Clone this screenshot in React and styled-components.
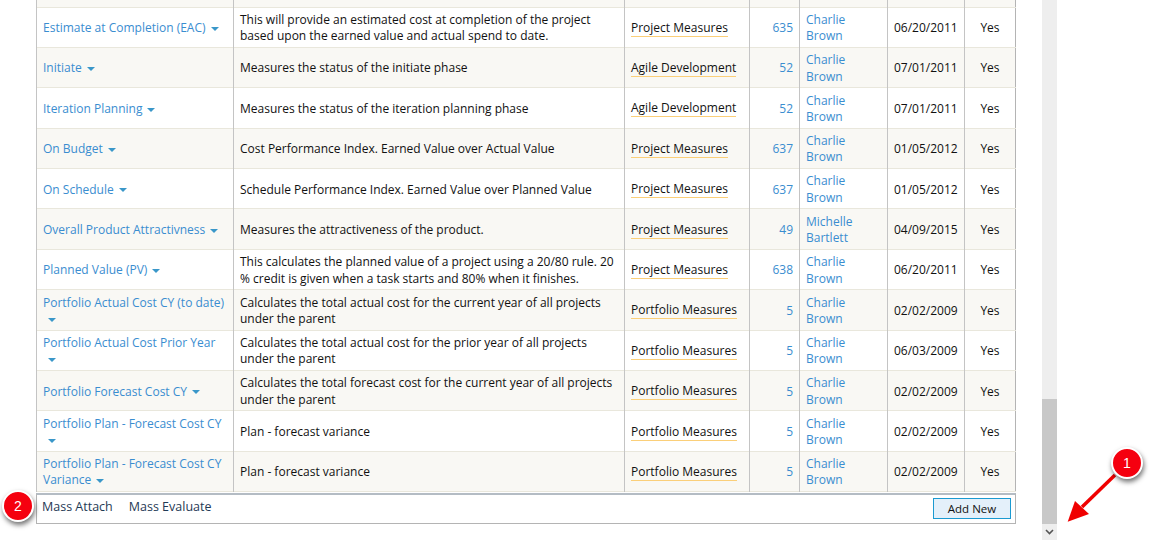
import React from "react";
import styled, { createGlobalStyle } from "styled-components";

const GlobalStyle = createGlobalStyle`
  html, body { margin: 0; padding: 0; background: #fff; overflow: hidden; }
  body { font-family: "Open Sans", "Liberation Sans", sans-serif; font-size: 12px; color: #111; }
`;

const Page = styled.div`
  position: relative;
  width: 1153px;
  height: 540px;
  display: flex;
  overflow: hidden;
`;

const Content = styled.div`
  width: 980px;
  margin-left: 36px;
  margin-right: 26px;
`;

const Table = styled.table`
  width: 980px;
  table-layout: fixed;
  border-collapse: collapse;
  border-left: 1px solid #b4b4b4;
  border-right: 1px solid #b4b4b4;
  line-height: 16.4px;
`;

const Row = styled.tr`
  height: ${(p) => p.$h || 40.4}px;
  background: ${(p) => (p.$alt ? "#f9f8f4" : "#fff")};
  border-bottom: 1px solid #e9e7dc;
`;

const Cell = styled.td`
  padding: 2px 6px 0;
  border-left: 1px solid #c4c4c4;
  text-align: ${(p) => p.$align || "left"};
  vertical-align: middle;
`;

const NameLink = styled.a`
  color: #3a8dd0;
`;

const Caret = styled.span`
  display: inline-block;
  width: 0;
  height: 0;
  margin-left: 5px;
  vertical-align: middle;
  border-left: 4px solid transparent;
  border-right: 4px solid transparent;
  border-top: 4px solid #3a97c9;
`;

const Category = styled.span`
  display: inline-block;
  line-height: 16px;
  border-bottom: 1px solid #fbcf79;
`;

const Footer = styled.div`
  box-sizing: border-box;
  height: 31px;
  margin-top: 1px;
  border: 1px solid #b4b4b4;
  border-top: 2px solid #b4bcc4;
  display: flex;
  align-items: center;
  padding: 0 4px 2px 5px;
  font-size: 12.5px;
  color: #1f3a55;
`;

const FooterLink = styled.span`
  margin-right: 16px;
  margin-bottom: 4px;
`;

const AddButton = styled.button`
  margin-left: auto;
  width: 78px;
  height: 21px;
  padding: 0;
  font: inherit;
  font-size: 11.5px;
  color: #111;
  background: #e4f0fa;
  border: 1px solid #1b9ad1;
`;

const Scrollbar = styled.div`
  width: 15px;
  height: 540px;
  background: #eeeeee;
  display: flex;
  flex-direction: column;
  justify-content: flex-end;
`;

const Thumb = styled.div`
  height: 125px;
  background: #c8c8c8;
`;

const ArrowButton = styled.div`
  height: 16px;
  display: flex;
  align-items: center;
  justify-content: center;
`;

const Badge = styled.div`
  position: absolute;
  left: ${(p) => p.$x}px;
  top: ${(p) => p.$y}px;
  width: 28px;
  height: 28px;
  border-radius: 50%;
  background: #f5000f;
  border: 2px solid #fff;
  box-shadow: 1px 3px 5px rgba(0, 0, 0, 0.55);
  color: #fff;
  font-family: "Liberation Sans", sans-serif;
  font-size: 14px;
  display: flex;
  align-items: center;
  justify-content: center;
`;

const Arrow = styled.svg`
  position: absolute;
  left: 1060px;
  top: 470px;
`;

const rows = [
  ["Estimate at Completion (EAC)", "This will provide an estimated cost at completion of the project based upon the earned value and actual spend to date.", "Project Measures", "635", "Charlie Brown", "06/20/2011"],
  ["Initiate", "Measures the status of the initiate phase", "Agile Development", "52", "Charlie Brown", "07/01/2011"],
  ["Iteration Planning", "Measures the status of the iteration planning phase", "Agile Development", "52", "Charlie Brown", "07/01/2011"],
  ["On Budget", "Cost Performance Index. Earned Value over Actual Value", "Project Measures", "637", "Charlie Brown", "01/05/2012"],
  ["On Schedule", "Schedule Performance Index. Earned Value over Planned Value", "Project Measures", "637", "Charlie Brown", "01/05/2012"],
  ["Overall Product Attractivness", "Measures the attractiveness of the product.", "Project Measures", "49", "Michelle Bartlett", "04/09/2015"],
  ["Planned Value (PV)", "This calculates the planned value of a project using a 20/80 rule. 20 % credit is given when a task starts and 80% when it finishes.", "Project Measures", "638", "Charlie Brown", "06/20/2011"],
  ["Portfolio Actual Cost CY (to date)", "Calculates the total actual cost for the current year of all projects under the parent", "Portfolio Measures", "5", "Charlie Brown", "02/02/2009"],
  ["Portfolio Actual Cost Prior Year", "Calculates the total actual cost for the prior year of all projects under the parent", "Portfolio Measures", "5", "Charlie Brown", "06/03/2009"],
  ["Portfolio Forecast Cost CY", "Calculates the total forecast cost for the current year of all projects under the parent", "Portfolio Measures", "5", "Charlie Brown", "02/02/2009"],
  ["Portfolio Plan - Forecast Cost CY", "Plan - forecast variance", "Portfolio Measures", "5", "Charlie Brown", "02/02/2009"],
  ["Portfolio Plan - Forecast Cost CY Variance", "Plan - forecast variance", "Portfolio Measures", "5", "Charlie Brown", "02/02/2009"],
];

export default function App() {
  return (
    <Page>
      <GlobalStyle />
      <Content>
        <Table>
          <colgroup>
            <col style={{ width: 197 }} />
            <col style={{ width: 391 }} />
            <col style={{ width: 125 }} />
            <col style={{ width: 50 }} />
            <col style={{ width: 88 }} />
            <col style={{ width: 77 }} />
            <col style={{ width: 51 }} />
          </colgroup>
          <tbody>
            <Row $h={7} $alt>
              <Cell /><Cell /><Cell /><Cell /><Cell /><Cell /><Cell />
            </Row>
            {rows.map((r, i) => (
              <Row key={r[0] + i} $alt={i % 2 === 1}>
                <Cell>
                  <NameLink>{r[0]}</NameLink>
                  <Caret />
                </Cell>
                <Cell>{r[1]}</Cell>
                <Cell><Category>{r[2]}</Category></Cell>
                <Cell $align="right"><NameLink>{r[3]}</NameLink></Cell>
                <Cell><NameLink>{r[4]}</NameLink></Cell>
                <Cell>{r[5]}</Cell>
                <Cell $align="center">Yes</Cell>
              </Row>
            ))}
          </tbody>
        </Table>
        <Footer>
          <FooterLink>Mass Attach</FooterLink>
          <FooterLink>Mass Evaluate</FooterLink>
          <AddButton>Add New</AddButton>
        </Footer>
      </Content>
      <Scrollbar>
        <Thumb />
        <ArrowButton>
          <svg width="9" height="6" viewBox="0 0 9 6">
            <path d="M1 1l3.5 3.5L8 1" fill="none" stroke="#555" strokeWidth="1.6" />
          </svg>
        </ArrowButton>
      </Scrollbar>
      <Arrow width="70" height="60" viewBox="0 0 70 60">
        <path d="M55 5L22 37" stroke="#f00000" strokeWidth="3.5" fill="none" />
        <path d="M7.7 51.7L15 31L29 44Z" fill="#f00000" />
      </Arrow>
      <Badge $x={1111} $y={447}>1</Badge>
      <Badge $x={2} $y={490}>2</Badge>
    </Page>
  );
}
